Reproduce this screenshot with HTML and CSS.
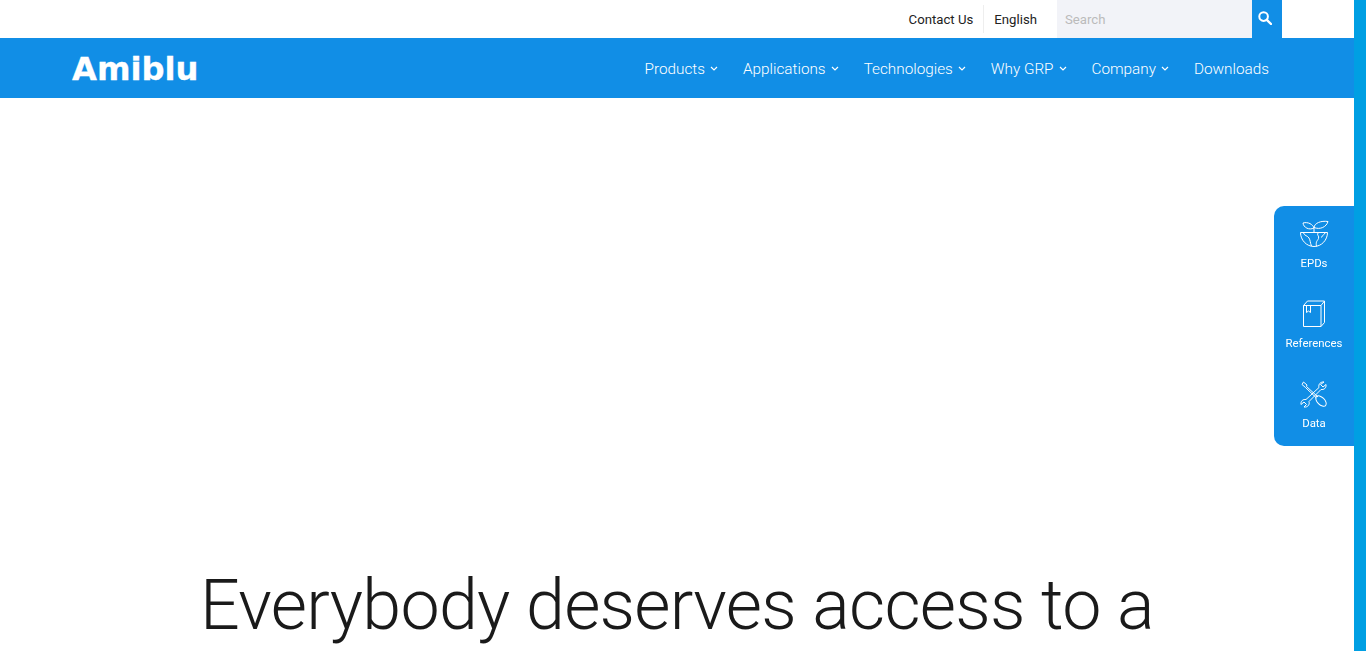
FILE: index.html
```html
<!DOCTYPE html>
<html lang="en">
<head>
    <meta charset="UTF-8">
    <meta name="viewport" content="width=device-width, initial-scale=1.0">
    <title>Amiblu</title>
    <link rel="stylesheet" href="styles.css">
</head>
<body>

    <div class="page">
        <!-- Top bar -->
        <div class="topbar">
            <a class="top-link" href="#contact">Contact Us</a>
            <a class="top-link top-lang" href="#lang">English</a>
            <form class="search">
                <input class="search-input" type="text" placeholder="Search">
                <button class="search-btn" type="button" aria-label="Search">
                    <svg width="14" height="14" viewBox="0 0 14 14" fill="none" stroke="#fff">
                        <circle cx="5.6" cy="5.6" r="4.3" stroke-width="2"/>
                        <path d="M8.8 8.8L13 13" stroke-width="2.4" stroke-linecap="round"/>
                    </svg>
                </button>
            </form>
        </div>

        <!-- Main menu -->
        <nav class="menu">
            <a class="logo" href="#home">Amiblu</a>
            <div class="menu-links">
                <a href="#products">Products <svg class="chev" viewBox="0 0 8 5"><path d="M1 1l3 3 3-3"/></svg></a>
                <a href="#applications">Applications <svg class="chev" viewBox="0 0 8 5"><path d="M1 1l3 3 3-3"/></svg></a>
                <a href="#technologies">Technologies <svg class="chev" viewBox="0 0 8 5"><path d="M1 1l3 3 3-3"/></svg></a>
                <a href="#why">Why GRP <svg class="chev" viewBox="0 0 8 5"><path d="M1 1l3 3 3-3"/></svg></a>
                <a href="#company">Company <svg class="chev" viewBox="0 0 8 5"><path d="M1 1l3 3 3-3"/></svg></a>
                <a href="#downloads">Downloads</a>
            </div>
        </nav>

        <!-- Hero -->
        <div class="hero">
            <h1>Everybody deserves access to a</h1>
        </div>
    </div>

    <div class="scroll-strip"></div>

    <!-- Side shortcuts -->
    <aside class="side">
        <a class="side-item" href="#epds">
            <svg class="side-icon" viewBox="0 0 30 28" fill="none" stroke="#fff" stroke-width="1">
                <path d="M1.500 12.500h27c0 7.500-6 14-13.500 14s-13.500-6.500-13.500-14z"/>
                <path d="M15 12.500V7.500M15 8C14 4.500 9 1.500 4 3c.5 4.500 6 7.500 11 5zM15 7.500C15.500 3 22 .500 29 1.500 27.500 7 21 10 15 7.500z"/>
                <path d="M4.500 13c1 3 4 2.500 5.500 5s1 4.500 2.500 8M19 13c-1.500 2 1.500 3 .5 5.500s-3 2.500-2 8M26 13c-.5 2-3 2-3.500 4.500"/>
            </svg>
            <span>EPDs</span>
        </a>
        <a class="side-item" href="#references">
            <svg class="side-icon" viewBox="0 0 30 28" fill="none" stroke="#fff" stroke-width="1">
                <path d="M4.500 5.500h17.500v21h-17.500z"/>
                <path d="M4.500 5.500l4-4.500h17v21.500l-3.500 4M22 5.500l3.500-4.500"/>
                <path d="M7.500 5.500v7l2-1.500 2 1.500v-7"/>
            </svg>
            <span>References</span>
        </a>
        <a class="side-item" href="#data">
            <svg class="side-icon" viewBox="0 0 30 28" fill="none" stroke="#fff" stroke-width="1">
                <ellipse cx="22" cy="21" rx="6.500" ry="3.600" transform="rotate(45 22 21)"/>
                <path d="M17.500 18L6.500 7.500 3 4.500 4.500 2 8 5l-.5 1.500L19 17"/>
                <path d="M25 2c-3-.5-6 2-5 5.500L7 19.500c-3-.5-5.500 1.500-5 5l3-2.500 2.500 2.500-2.500 2.500c3.500.5 6-2 5-5.500L22 9.500c3 .5 5.500-1.500 5-5l-3 2.500-2.500-2.500z"/>
            </svg>
            <span>Data</span>
        </a>
    </aside>

</body>
</html>
```
FILE: styles.css
```css
html, body {
    height: 100%;
    overflow: hidden;
}

body {
    font-family: "Roboto", "Open Sans", sans-serif;
    margin: 0;
    padding: 0;
    display: flex;
    background: #fff;
}

a {
    text-decoration: none;
}

.page {
    flex: 1;
    min-width: 0;
}

.scroll-strip {
    width: 12px;
    background-color: #009fe3;
}

/* Top bar */
.topbar {
    height: 38px;
    display: flex;
    justify-content: flex-end;
    align-items: center;
    padding-right: 72px;
}

.top-link {
    color: #222;
    font-size: 13.2px;
    padding: 1px 10px 0;
    line-height: 27px;
}

.top-lang {
    border-left: 1px solid #eee;
    margin-right: 10px;
}

.search {
    display: flex;
    height: 38px;
}

.search-input {
    width: 195px;
    border: none;
    outline: none;
    padding: 0 8px;
    box-sizing: border-box;
    background-color: #f2f3f8;
    font-family: inherit;
    font-size: 13.2px;
}

.search-input::placeholder {
    color: #bbb;
}

.search-btn {
    width: 30px;
    border: none;
    padding: 0 4px 2px 0;
    background-color: #118ee6;
    display: flex;
    align-items: center;
    justify-content: center;
}

/* Main menu */
.menu {
    height: 60px;
    background-color: #118ee6;
    display: flex;
    align-items: center;
    justify-content: space-between;
    padding: 0 85px 0 72px;
}

.logo {
    color: #fff;
    font-family: "DejaVu Sans", sans-serif;
    font-weight: 700;
    font-size: 32.2px;
    padding-top: 2px;
    -webkit-text-stroke: 0.3px #fff;
}

.menu-links {
    display: flex;
    gap: 25px;
    padding-top: 1px;
}

.menu-links a {
    color: #fff;
    font-size: 15.3px;
    font-weight: 300;
    display: flex;
    align-items: center;
    gap: 5px;
}

.chev {
    width: 8px;
    height: 5px;
    fill: none;
    stroke: #fff;
    stroke-width: 1.2;
}

/* Hero */
.hero {
    padding-top: 462px;
    text-align: center;
}

.hero h1 {
    margin: 0;
    color: #1a1a1a;
    font-size: 70px;
    font-weight: 300;
    letter-spacing: -0.73px;
    line-height: 90px;
    white-space: nowrap;
}

/* Side shortcuts */
.side {
    position: fixed;
    top: 206px;
    right: 12px;
    width: 80px;
    height: 240px;
    background-color: #118ee6;
    border-radius: 10px 0 0 10px;
    display: flex;
    flex-direction: column;
}

.side-item {
    height: 80px;
    display: flex;
    flex-direction: column;
    align-items: center;
    padding-top: 14px;
    box-sizing: border-box;
    color: #fff;
    font-size: 11.4px;
}

.side-icon {
    width: 30px;
    height: 28px;
    margin-bottom: 8px;
}
```
